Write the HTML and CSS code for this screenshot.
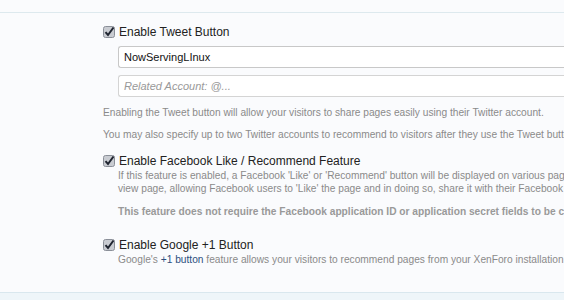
FILE: index.html
```html
<!DOCTYPE html>
<html>
  <head>
    <meta charset="utf-8" />
    <title>Sharing options</title>
    <link rel="stylesheet" href="styles.css">
  </head>
  <body>
    <div class="panel">
      <div class="option">
        <label class="check">
          <svg class="box" width="12" height="12" viewBox="0 0 12 12"><rect x="0.5" y="0.5" width="11" height="11" rx="2" fill="#c9ccd2" stroke="#8a8f98"/><path d="M2.5 6.2 L5 9 L10.5 1.5" fill="none" stroke="#1f2430" stroke-width="2"/></svg>
          Enable Tweet Button
        </label>
        <div class="inputs">
          <div class="textbox">NowServingLInux</div>
          <div class="textbox placeholder">Related Account: @...</div>
        </div>
      </div>
      <p class="explain first">Enabling the Tweet button will allow your visitors to share pages easily using their Twitter account.</p>
      <p class="explain">You may also specify up to two Twitter accounts to recommend to visitors after they use the Tweet button.</p>

      <div class="option">
        <label class="check">
          <svg class="box" width="12" height="12" viewBox="0 0 12 12"><rect x="0.5" y="0.5" width="11" height="11" rx="2" fill="#c9ccd2" stroke="#8a8f98"/><path d="M2.5 6.2 L5 9 L10.5 1.5" fill="none" stroke="#1f2430" stroke-width="2"/></svg>
          Enable Facebook Like / Recommend Feature
        </label>
        <div class="hint">
          <p>If this feature is enabled, a Facebook 'Like' or 'Recommend' button will be displayed on various pages such as the thread<br>view page, allowing Facebook users to 'Like' the page and in doing so, share it with their Facebook friends.</p>
          <p class="strong">This feature does not require the Facebook application ID or application secret fields to be completed.</p>
        </div>
      </div>

      <div class="option last">
        <label class="check">
          <svg class="box" width="12" height="12" viewBox="0 0 12 12"><rect x="0.5" y="0.5" width="11" height="11" rx="2" fill="#c9ccd2" stroke="#8a8f98"/><path d="M2.5 6.2 L5 9 L10.5 1.5" fill="none" stroke="#1f2430" stroke-width="2"/></svg>
          Enable Google +1 Button
        </label>
        <div class="hint">
          <p>Google's <a href="#">+1 button</a> feature allows your visitors to recommend pages from your XenForo installation to others.</p>
        </div>
      </div>
    </div>
    <div class="footer"></div>
  </body>
</html>
```

FILE: styles.css
```css
html, body {
  margin: 0;
  background: #fafbfd;
  overflow: hidden;
}

body {
  font-family: "Liberation Sans", Arial, sans-serif;
  width: 564px;
  height: 300px;
}

/* the form continues past the right edge, like the reference crop */
.panel {
  margin-top: 12px;
  border-top: 1px solid #dde9ee;
  border-bottom: 1px solid #d9e7ee;
  padding: 13px 0 0 103px;
  box-sizing: border-box;
  height: 281px;
  white-space: nowrap;
  overflow: hidden;
}

.check {
  display: flex;
  align-items: center;
  gap: 4px;
  font-size: 12px;
  color: #222;
  height: 12px;
}

.box {
  flex: none;
}

.inputs {
  margin: 8px 0 0 15px;
  display: flex;
  flex-direction: column;
  gap: 7px;
}

.textbox {
  height: 20px;
  line-height: 20px;
  border: 1px solid #c8c8c8;
  border-right: none;
  border-radius: 3px 0 0 3px;
  background: #fff;
  padding-left: 5px;
  font-size: 11px;
  color: #111;
}

.textbox.placeholder {
  font-style: italic;
  color: #999;
  border-color: #d4d4d4;
}

.explain {
  margin: 0;
  font-size: 10.2px;
  line-height: 13px;
  color: #8a8a8a;
}

.explain.first {
  margin-top: 9px;
}

.explain + .explain {
  margin-top: 9px;
}

.explain + .option {
  margin-top: 14px;
}

.hint {
  margin: 2px 0 0 15px;
  font-size: 10.2px;
  line-height: 13px;
  color: #8a8a8a;
}

.hint p {
  margin: 0;
}

.hint p + p {
  margin-top: 10px;
}

.hint .strong {
  font-weight: bold;
  color: #999;
}

.option.last {
  margin-top: 21px;
}

.hint a {
  color: #2b4f7e;
  text-decoration: none;
}

.footer {
  background: #eef5f9;
  height: 20px;
}
```
